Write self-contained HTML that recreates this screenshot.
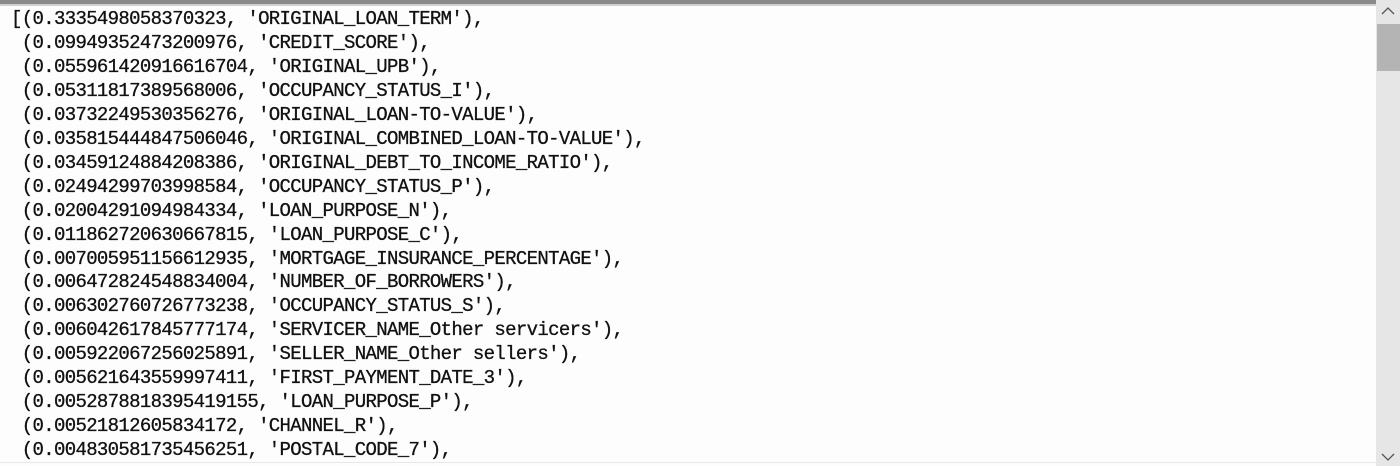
<!DOCTYPE html>
<html><head><style>
html,body{margin:0;padding:0;width:1400px;height:466px;overflow:hidden;background:#fdfdfd;}
.top{position:absolute;left:0;top:0;width:1376px;height:4px;background:#8a8a8a;}
.top2{position:absolute;left:0;top:4px;width:1376px;height:2px;background:#d0d0d0;}
pre{position:absolute;left:11px;top:8px;margin:0;font-family:"Liberation Mono",monospace;font-size:19px;letter-spacing:-0.66px;line-height:23.95px;color:#111;-webkit-text-stroke:0.3px #111;}
.sb{position:absolute;left:1376px;top:0;width:24px;height:466px;background:#e6e6e6;}
.thumb{position:absolute;left:1377px;top:24px;width:23px;height:47px;background:#b4b4b4;}
.bot{position:absolute;left:0;top:462px;width:1376px;height:1px;background:#e8e8e8;}
</style></head><body>
<div class="top"></div><div class="top2"></div>
<pre>[(0.3335498058370323, 'ORIGINAL_LOAN_TERM'),
 (0.09949352473200976, 'CREDIT_SCORE'),
 (0.055961420916616704, 'ORIGINAL_UPB'),
 (0.05311817389568006, 'OCCUPANCY_STATUS_I'),
 (0.03732249530356276, 'ORIGINAL_LOAN-TO-VALUE'),
 (0.035815444847506046, 'ORIGINAL_COMBINED_LOAN-TO-VALUE'),
 (0.03459124884208386, 'ORIGINAL_DEBT_TO_INCOME_RATIO'),
 (0.02494299703998584, 'OCCUPANCY_STATUS_P'),
 (0.02004291094984334, 'LOAN_PURPOSE_N'),
 (0.011862720630667815, 'LOAN_PURPOSE_C'),
 (0.007005951156612935, 'MORTGAGE_INSURANCE_PERCENTAGE'),
 (0.006472824548834004, 'NUMBER_OF_BORROWERS'),
 (0.006302760726773238, 'OCCUPANCY_STATUS_S'),
 (0.006042617845777174, 'SERVICER_NAME_Other servicers'),
 (0.005922067256025891, 'SELLER_NAME_Other sellers'),
 (0.005621643559997411, 'FIRST_PAYMENT_DATE_3'),
 (0.0052878818395419155, 'LOAN_PURPOSE_P'),
 (0.00521812605834172, 'CHANNEL_R'),
 (0.004830581735456251, 'POSTAL_CODE_7'),</pre>
<div class="bot"></div>
<div class="sb"></div>
<div class="thumb"></div>
<svg style="position:absolute;left:1380px;top:6px" width="16" height="10"><path d="M2 8 L8 2 L14 8" fill="none" stroke="#555" stroke-width="1.3"/></svg>
<svg style="position:absolute;left:1380px;top:452px" width="16" height="10"><path d="M2 2 L8 8 L14 2" fill="none" stroke="#555" stroke-width="1.3"/></svg>
</body></html>
